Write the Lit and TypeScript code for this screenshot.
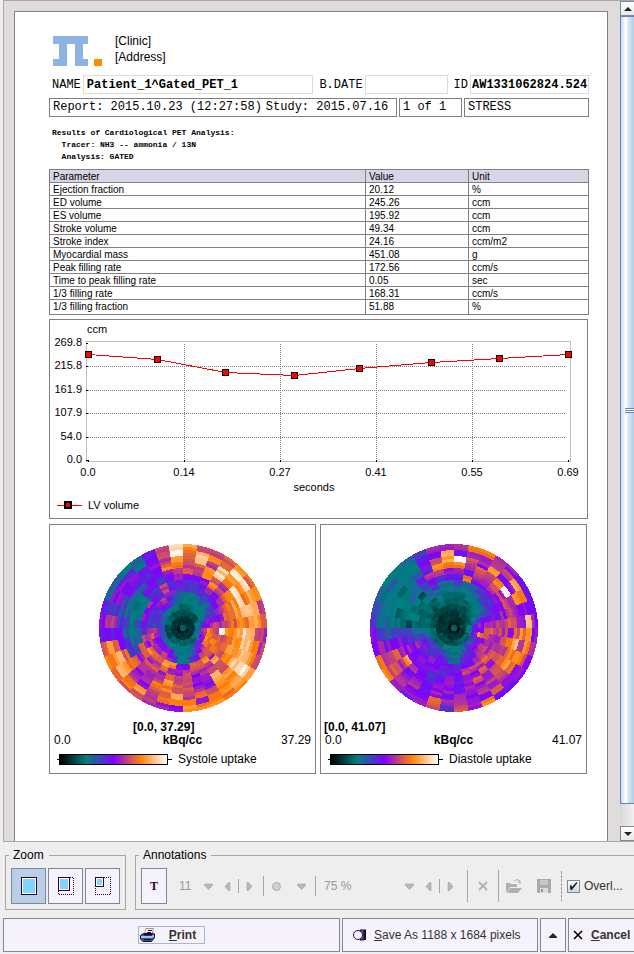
import { LitElement, html, svg, css } from "lit";
import { customElement, property } from "lit/decorators.js";

const SCALE: number[][] = [
  [0, 0, 0],
  [0, 128, 128],
  [128, 0, 255],
  [255, 128, 0],
  [255, 255, 255],
];

/** Colour for an uptake level between 0 and 20. */
function uptakeColor(level: number): string {
  const v = Math.max(0, Math.min(19.99, level)) / 5;
  const i = Math.floor(v);
  const f = v - i;
  const c = SCALE[i].map((a, k) => Math.round(a + (SCALE[i + 1][k] - a) * f));
  return `rgb(${c.join(",")})`;
}

// One string per 10 degree sector, clockwise from the top; each character is
// the level of a band, from the rim to the apex.
const SYSTOLE = [
  "gfdcea88554322", "cihdca88554322", "dfcgga98654322", "efiidfb8755322",
  "fjgfcda9655322", "eigjfeba865322", "fgfigedb885422", "dgiigfeaaa8522",
  "eghfgedccba522", "cchihgfkdfc622", "cfhigfeddfb621", "dfihfgfdffa521",
  "gjjigfdeefa521", "ggfgedgcdc8421", "fgfghdcfca8421", "gfdaabcda86421",
  "fbecbacd865422", "gecddcca555421", "bfgedcba555421", "bedfgdcf865421",
  "ccdecbegb95421", "egbccdceca5421", "efcbcdbeca6421", "figfebdfc96321",
  "ffie88ebca7321", "dgda866cdc7321", "aa9a6568cc7321", "acc87579877321",
  "9887656a886422", "6aa7645a886422", "6a9a655b986422", "58a97989a96422",
  "6599aa88ca5322", "9aaa98cc985322", "decfba8a765322", "ikfecba8654322",
];

const DIASTOLE = [
  "bakfb986443221", "fbdcae65443221", "fcbdca66543321", "bcgdcb86543321",
  "bcafdb88554321", "9gbjca88654321", "aegcdba8765321", "aabcdb9a997431",
  "bhbcedcccb9521", "agfebcddda9521", "cfdhedcbdfa521", "aegfdccbbb8421",
  "baegfddcca7421", "abcddbecba7421", "aebcadcba98421", "facbeac9a86421",
  "baabbaca865421", "ecba99a8655321", "8b9bbaa9655321", "debaa98a865321",
  "caaa98aa975321", "abcbaa9b984321", "cdbacaa9874321", "fdecgba9a84321",
  "eccebbab984321", "bcaaa987864221", "a8777876654221", "86655434443221",
  "76554455443221", "65555544443221", "56545654443221", "55566635433221",
  "65579866443221", "8aa9ca86543221", "bacfc865443221", "cggfba65443221",
];

function noise(a: number, b: number): number {
  const x = Math.sin(a * 127.1 + b * 311.7) * 43758.5453;
  return x - Math.floor(x);
}

function sectorPath(r0: number, r1: number, s: number): string {
  const a0 = (s * Math.PI) / 18;
  const a1 = ((s + 1) * Math.PI) / 18;
  const p = (r: number, a: number) =>
    `${(84 + r * Math.sin(a)).toFixed(2)} ${(84 - r * Math.cos(a)).toFixed(2)}`;
  return `M${p(r1, a0)}A${r1} ${r1} 0 0 1 ${p(r1, a1)}L${p(r0, a1)}L${p(r0, a0)}Z`;
}

@customElement("polar-map")
class PolarMap extends LitElement {
  @property({ attribute: false }) sectors: string[] = [];
  @property() range = "";
  @property() max = "";
  @property() name = "";
  @property({ type: Boolean, reflect: true }) inset = false;

  static styles = css`
    :host { display: block; border: 1px solid #808080; padding: 19px 0 6px; }
    .map { display: block; margin: 0 auto; width: 168px; height: 168px; }
    .range { font-weight: bold; line-height: 13px; padding: 9px 0 0 3px; }
    :host([inset]) .range { padding-left: 83px; }
    .scale { display: grid; grid-template-columns: 1fr auto 1fr; line-height: 13px; padding: 0 4px 0 4px; }
    .unit { font-weight: bold; }
    .max { text-align: right; }
    .legend { display: flex; align-items: center; line-height: 16px; margin-top: 4px; padding-left: 7px; }
    .tick { width: 2px; height: 1px; background: #000; }
    .tick.end { width: 4px; margin-right: 6px; }
    .bar {
      box-sizing: border-box; width: 109px; height: 11px; border: 1px solid #000;
      background: linear-gradient(to right, #000, #008080 25%, #8000ff 50%, #ff8000 75%, #fff);
    }
  `;

  private cells() {
    const out = [];
    for (let s = 0; s < 36; s++) {
      for (let r = 0; r < 28; r++) {
        const band = parseInt(this.sectors[s][r >> 1], 36);
        const spread = band < 6 ? 1 : band < 10 ? 1.4 : 2.2;
        const shift = (noise(s + this.name.length, r) - 0.5) * spread;
        out.push(svg`<path d=${sectorPath(84 - (r + 1) * 3, 84 - r * 3, s)} fill=${uptakeColor(band + shift)} />`);
      }
    }
    return out;
  }

  render() {
    return html`
      <svg class="map" viewBox="0 0 168 168" shape-rendering="crispEdges" role="img" aria-label=${this.name}>
        ${this.cells()}
        <circle cx="84" cy="84" r="3" fill="#005f5f" />
      </svg>
      <div class="range">${this.range}</div>
      <div class="scale"><span>0.0</span><span class="unit">kBq/cc</span><span class="max">${this.max}</span></div>
      <div class="legend">
        <span class="tick"></span><span class="bar"></span><span class="tick end"></span>
        <span>${this.name}</span>
      </div>
    `;
  }
}

@customElement("volume-chart")
class VolumeChart extends LitElement {
  static styles = css`
    :host { display: block; border: 1px solid #808080; }
    .plot { display: block; width: 100%; font-size: 11px; }
    .frame { fill: none; stroke: #c0c0c0; }
    .grid { stroke: #808080; stroke-dasharray: 1 1; }
    .tick { stroke: #000; }
    .curve { fill: none; stroke: #f00; }
    .mark { fill: #f00; stroke: #000; }
    .end { text-anchor: end; }
    .mid { text-anchor: middle; }
  `;

  render() {
    const ys: [string, number][] = [["269.8", 23], ["215.8", 46], ["161.9", 70], ["107.9", 93], ["54.0", 117], ["0.0", 140]];
    const xs: [string, number][] = [["0.0", 38], ["0.14", 134], ["0.27", 230], ["0.41", 326], ["0.55", 422], ["0.69", 518]];
    const pts = [[38, 34], [107, 39], [175, 52], [244, 55], [309, 48], [381, 42], [449, 38], [518, 34]];
    return html`
      <svg class="plot" viewBox="0 0 537 198" shape-rendering="crispEdges" role="img" aria-label="LV volume over time">
        <text x="37" y="13">ccm</text>
        <rect class="frame" x="36.5" y="21.5" width="484" height="120" />
        ${ys.map(([t, y], i) => svg`
          ${i > 0 && i < 5 ? svg`<line class="grid" x1="38" x2="515" y1=${y + 0.5} y2=${y + 0.5} />` : ""}
          <line class="tick" x1="36" x2="38" y1=${y + 0.5} y2=${y + 0.5} />
          <text class="end" x="32" y=${y + 3}>${t}</text>`)}
        ${xs.map(([t, x], i) => svg`
          ${i > 0 && i < 5 ? svg`<line class="grid" y1="24" y2="140" x1=${x + 0.5} x2=${x + 0.5} />` : ""}
          <line class="tick" y1="140" y2="142" x1=${x + 0.5} x2=${x + 0.5} />
          <text class="mid" x=${x} y="156">${t}</text>`)}
        <text class="mid" x="264" y="171">seconds</text>
        <polyline class="curve" points=${pts.map(([x, y]) => `${x + 0.5},${y + 0.5}`).join(" ")} />
        ${pts.map(([x, y]) => svg`<rect class="mark" x=${x - 2.5} y=${y - 2.5} width="6" height="6" />`)}
        <line class="curve" x1="7" x2="32" y1="185.5" y2="185.5" />
        <rect x="14" y="181" width="8" height="8" />
        <rect x="16" y="183" width="4" height="4" fill="#f00" />
        <text x="38" y="189">LV volume</text>
      </svg>
    `;
  }
}

const ROWS = [
  ["Ejection fraction", "20.12", "%"],
  ["ED volume", "245.26", "ccm"],
  ["ES volume", "195.92", "ccm"],
  ["Stroke volume", "49.34", "ccm"],
  ["Stroke index", "24.16", "ccm/m2"],
  ["Myocardial mass", "451.08", "g"],
  ["Peak filling rate", "172.56", "ccm/s"],
  ["Time to peak filling rate", "0.05", "sec"],
  ["1/3 filling rate", "168.31", "ccm/s"],
  ["1/3 filling fraction", "51.88", "%"],
];

@customElement("report-page")
class ReportPage extends LitElement {
  static styles = css`
    :host { display: block; box-sizing: border-box; background: #fff; border: 1px solid #808080; border-bottom: none; padding: 21px 18px 0 34px; }
    .head { display: flex; gap: 13px; padding-left: 4px; line-height: 16px; }
    .logo { display: block; width: 49px; height: 30px; margin-top: 3px; }
    .mono { font-family: "Liberation Mono", monospace; }
    .ids { display: flex; align-items: center; margin-top: 9px; padding-left: 3px; }
    .ids label { margin-right: 2px; white-space: nowrap; }
    .ids input {
      box-sizing: border-box; height: 19px; min-width: 0; border: 1px solid #dcdcdc; padding: 0 0 0 3px;
      font: bold 12px "Liberation Mono", monospace; color: #000; background: #fff; margin-right: 6px; outline: none;
    }
    .ids .name { flex: 1; }
    .ids .date { width: 83px; }
    .ids .id { width: 119px; margin-right: 0; padding-left: 1px; }
    .meta { display: flex; gap: 2px; margin-top: 4px; }
    .cell { box-sizing: border-box; height: 19px; border: 1px solid #808080; line-height: 17px; padding-left: 3px; white-space: nowrap; }
    .cell.when { flex: 1; display: flex; gap: 4px; }
    .cell.pages { width: 63px; }
    .cell.study { width: 125px; }
    .results { margin: 10px 0 6px; padding-left: 3px; font-size: 8px; font-weight: bold; line-height: 12px; white-space: pre; }
    table { width: 100%; border-collapse: collapse; table-layout: fixed; font-size: 10px; }
    th, td { border: 1px solid #808080; padding: 2px 0 0 3px; line-height: 10px; text-align: left; font-weight: normal; }
    th { background: #d8d6e6; }
    tr:last-child td { padding-bottom: 2px; }
    thead tr:last-child th { padding-bottom: 0; }
    .value { width: 103px; box-sizing: border-box; }
    .unit { width: 120px; box-sizing: border-box; }
    volume-chart { margin: 4px 1px 5px 0; }
    .maps { display: grid; grid-template-columns: 1fr 1fr; gap: 4px; padding-right: 2px; }
  `;

  render() {
    return html`
      <header class="head">
        <svg class="logo" viewBox="0 0 49 30" shape-rendering="crispEdges" aria-hidden="true">
          <path fill="#8db3e2" d="M0 0H35V8H30V23H35V30H22V8H14V30H0V23H6V8H0Z" />
          <path fill="#ff8c00" d="M41 23H49V30H41Z" />
        </svg>
        <div>[Clinic]<br />[Address]</div>
      </header>
      <div class="ids mono">
        <label for="name">NAME</label><input id="name" class="name" readonly value="Patient_1^Gated_PET_1" />
        <label for="date">B.DATE</label><input id="date" class="date" readonly value="" />
        <label for="pid">ID</label><input id="pid" class="id" readonly value="AW1331062824.524" />
      </div>
      <div class="meta mono">
        <div class="cell when"><span>Report: 2015.10.23 (12:27:58)</span><span>Study: 2015.07.16</span></div>
        <div class="cell pages">1 of 1</div>
        <div class="cell study">STRESS</div>
      </div>
      <div class="results mono">${"Results of Cardiological PET Analysis:\n  Tracer: NH3 -- ammonia / 13N\n  Analysis: GATED"}</div>
      <table>
        <thead><tr><th>Parameter</th><th class="value">Value</th><th class="unit">Unit</th></tr></thead>
        <tbody>${ROWS.map((r) => html`<tr>${r.map((c) => html`<td>${c}</td>`)}</tr>`)}</tbody>
      </table>
      <volume-chart></volume-chart>
      <div class="maps">
        <polar-map inset .sectors=${SYSTOLE} range="[0.0, 37.29]" max="37.29" name="Systole uptake"></polar-map>
        <polar-map .sectors=${DIASTOLE} range="[0.0, 41.07]" max="41.07" name="Diastole uptake"></polar-map>
      </div>
    `;
  }
}

const arrow = (d: string) => html`<svg class="arrow" viewBox="0 0 9 9" aria-hidden="true"><path d=${d} fill="#b8b8b8" stroke="#a0a0a0" stroke-width="0.6" /></svg>`;
const DOWN = "M0.5 2H8.500V3.500L4.500 7.500L0.500 3.500Z";
const LEFT = "M7 0.500V8.500H5.500L2 4.500L5.500 0.500Z";
const RIGHT = "M2 0.500V8.500H3.500L7 4.500L3.500 0.500Z";

@customElement("app-root")
class AppRoot extends LitElement {
  static styles = css`
    :host {
      display: flex; flex-direction: column; box-sizing: border-box; height: 100vh; min-height: 400px; overflow: hidden;
      background: #eee; font: 12px "Liberation Sans", Arial, sans-serif; color: #000;
    }
    button { font: inherit; color: #333; cursor: pointer; }
    .view { flex: 1; min-height: 0; display: flex; margin-left: 3px; border: 1px solid #aaa7a7; border-right: none; background: #e0dcdb; overflow: hidden; }
    .stage { flex: 1; min-width: 0; padding: 10px 12px 0 10px; display: flex; overflow: hidden; }
    report-page { flex: 1; min-width: 0; flex-shrink: 0; }
    .scroll { width: 14px; display: flex; flex-direction: column; background: linear-gradient(to right, #d8d8d8, #f0f0f0); }
    .step { height: 15px; padding: 0; border: 1px solid #7a8a99; border-right: none; background: linear-gradient(#fff, #e8e8e8); display: flex; align-items: center; justify-content: center; }
    .step svg { width: 8px; height: 4px; display: block; }
    .thumb { flex: 1; margin-bottom: 22px; border: 1px solid #6382bf; border-right: none; display: flex; align-items: center; justify-content: flex-end; background: linear-gradient(to right, #c8d8ec, #fff 35%, #cfdff0 65%, #b8cfe5); }
    .grip { width: 9px; height: 5px; background: repeating-linear-gradient(#6382bf 0 1px, #fff 1px 2px); }

    .tools { display: flex; gap: 9px; padding: 6px 0 0 5px; }
    fieldset { margin: 0; min-width: 0; border: 1px solid #a8a5a5; padding: 6px 5px 5px; display: flex; }
    legend { margin-left: -2px; padding: 0 5px 0 4px; line-height: 14px; font-size: 12px; }
    .zoom { gap: 2px; }
    .notes { flex: 1; border-right: none; padding-right: 0; align-items: center; }
    .tile { box-sizing: border-box; width: 35px; height: 36px; padding: 0; border: 1px solid #7a8a99; background: #f5f2fb; display: flex; align-items: center; justify-content: center; }
    .tile.on { background: #b8cfe5; }
    .tile.letter { width: 26px; font: bold 12px "Liberation Serif", serif; color: #303; margin-right: 12px; }
    .tile svg { width: 16px; height: 18px; }
    .flat { border: none; background: none; padding: 0; display: block; height: 16px; }
    .arrow { display: block; width: 9px; height: 9px; flex: none; }
    select { appearance: none; border: none; background: none; font: inherit; color: #999; padding: 0; margin: 0; opacity: 1; }
    .size { width: 25px; }
    .percent { width: 81px; }
    .row { display: flex; align-items: center; }
    .colour { display: flex; align-items: center; gap: 16px; }
    .pair { display: flex; align-items: center; gap: 6px; margin-left: 10px; }
    .pair .flat, .colour .flat { display: flex; align-items: center; }
    .sep { width: 1px; height: 14px; background: #a8a5a5; }
    .sep.mid { height: 20px; margin: 0 8px 0 9px; }
    .sep.tall { height: 32px; margin: 0 7px; }
    .sep.first { margin-left: 12px; }
    .sep.dash { height: 30px; background: repeating-linear-gradient(#999 0 3px, transparent 3px 4px); margin: 0 5px 0 9px; }
    .ico { display: block; width: 16px; height: 16px; }
    .files { display: flex; gap: 14px; }
    .check { display: flex; align-items: center; gap: 4px; color: #333; white-space: nowrap; }
    .check input { appearance: none; box-sizing: border-box; width: 13px; height: 13px; margin: 0; border: 1px solid #7a8a99; background: linear-gradient(#fff, #c4d6e8); display: grid; place-items: center; }
    .check input:checked::before { content: ""; width: 8px; height: 8px; background: #222; clip-path: polygon(0 40%, 25% 40%, 30% 62%, 88% 0, 100% 12%, 30% 100%, 12% 100%); }

    .actions { display: grid; grid-template-columns: minmax(0, 338fr) 196px 26px 66px; gap: 2px; padding: 8px 0 2px 3px; }
    .act { box-sizing: border-box; height: 34px; padding: 0; border: 1px solid #7a8a99; background: #f5f2fb; display: flex; align-items: center; justify-content: center; white-space: nowrap; }
    .act.save { gap: 6px; justify-content: flex-start; padding-left: 9px; }
    .act.cancel { border-right: none; justify-content: flex-start; gap: 8px; padding-left: 4px; }
    .act b { font-weight: bold; }
    .focus { display: flex; align-items: center; gap: 13px; box-sizing: border-box; height: 18px; padding: 0 8px 0 1px; border: 1px solid #a3b8cc; }
  `;

  private zoomIcon(w: number, h: number) {
    return html`<svg viewBox="0 0 16 18" shape-rendering="crispEdges" aria-hidden="true">
      ${w < 16 ? svg`<path d="M${w} 0.500H15.500V17.500H0.500V${h}" fill="none" stroke="#330033" stroke-dasharray="1 1" />` : ""}
      <rect x="0.5" y="0.5" width=${w - 1} height=${h - 1} fill="#fff" stroke="#330033" />
      <rect x="2" y="2" width=${w - 4} height=${h - 4} fill="#80d4ff" />
    </svg>`;
  }

  private pair(what: string) {
    return html`<div class="pair">
      <button class="flat" disabled aria-label="Decrease ${what}">${arrow(LEFT)}</button>
      <span class="sep"></span>
      <button class="flat" disabled aria-label="Increase ${what}">${arrow(RIGHT)}</button>
    </div>`;
  }

  render() {
    return html`
      <main class="view">
        <div class="stage"><report-page></report-page></div>
        <div class="scroll">
          <button class="step" aria-label="Scroll up"><svg viewBox="0 0 8 4"><path d="M4 0L8 4H0Z" fill="#222" /></svg></button>
          <div class="thumb"><span class="grip"></span></div>
          <button class="step" aria-label="Scroll down"><svg viewBox="0 0 8 4"><path d="M4 4L8 0H0Z" fill="#222" /></svg></button>
        </div>
      </main>
      <section class="tools">
        <fieldset class="zoom">
          <legend>Zoom</legend>
          <button class="tile on" aria-label="Fit page">${this.zoomIcon(16, 18)}</button>
          <button class="tile" aria-label="Zoom 75 percent">${this.zoomIcon(12, 14)}</button>
          <button class="tile" aria-label="Zoom 50 percent">${this.zoomIcon(9, 10)}</button>
        </fieldset>
        <fieldset class="notes">
          <legend>Annotations</legend>
          <button class="tile letter" aria-label="Add text">T</button>
          <div class="row"><select class="size" disabled aria-label="Font size"><option>11</option></select>${arrow(DOWN)}</div>
          ${this.pair("font size")}
          <span class="sep mid"></span>
          <div class="colour">
            <button class="flat" disabled aria-label="Colour">
              <svg class="arrow" viewBox="0 0 9 9"><circle cx="4.5" cy="4.5" r="4" fill="#d0d0d0" stroke="#aaa" /></svg>
            </button>
            <button class="flat" disabled aria-label="Pick colour">${arrow(DOWN)}</button>
          </div>
          <span class="sep mid"></span>
          <div class="row"><select class="percent" disabled aria-label="Opacity"><option>75 %</option></select>${arrow(DOWN)}</div>
          ${this.pair("opacity")}
          <span class="sep tall first"></span>
          <button class="flat" disabled aria-label="Delete">
            <svg class="ico" viewBox="0 0 16 16"><path d="M4 4L12 12M12 4L4 12" stroke="#b4b4b4" stroke-width="2" /></svg>
          </button>
          <span class="sep tall"></span>
          <div class="files">
            <button class="flat" disabled aria-label="Open">
              <svg class="ico" viewBox="0 0 16 16"><path d="M0 14V5H4L5 6H11V9H4L1 14Z" fill="#b0b0b0" /><path d="M4 10H16L12 15H1Z" fill="#b0b0b0" /><path d="M8 3Q11 0 14 3V6M11.500 4H14.500" fill="none" stroke="#b0b0b0" /></svg>
            </button>
            <button class="flat" disabled aria-label="Save annotations">
              <svg class="ico" viewBox="0 0 16 16"><path d="M1 1H15V15H2L1 14Z" fill="#aaa" /><path d="M4 2H12V7H4Z" fill="#c6c6c6" /><path d="M4 10H12V15H4Z" fill="#ddd" /><path d="M5 11H7V14H5Z" fill="#999" /></svg>
            </button>
          </div>
          <span class="sep dash"></span>
          <label class="check"><input type="checkbox" checked />Overl...</label>
        </fieldset>
      </section>
      <footer class="actions">
        <button class="act">
          <span class="focus">
            <svg class="ico" viewBox="0 0 16 16" aria-hidden="true">
              <path d="M4.500 7L6 1.500H13.500L12 7Z" fill="#fff" stroke="#a09890" />
              <path d="M8 3.500H12M7 5.500H11" stroke="#303" />
              <path d="M1.500 7.500L4 6.500H12L14.500 7V10.500L11.500 14.500H3L0.500 12V8.500Z" fill="#3a5a7c" stroke="#303" />
              <path d="M1 10H12L14 8.500" fill="none" stroke="#80d4ff" stroke-width="2" />
              <path d="M4 12.500H11" stroke="#303" />
              <path d="M4 7.500H12" stroke="#303" stroke-width="2" />
            </svg>
            <b><u>P</u>rint</b>
          </span>
        </button>
        <button class="act save">
          <svg class="ico" viewBox="0 0 16 16" aria-hidden="true">
            <path d="M8 3H12V13H8Z" fill="#407080" stroke="#203" /><path d="M13 2.500V13" stroke="#203" stroke-width="2" />
            <circle cx="6" cy="8" r="4.500" fill="#f4f8ff" stroke="#306" />
          </svg>
          <span><u>S</u>ave As 1188 x 1684 pixels</span>
        </button>
        <button class="act" aria-label="More formats"><svg width="8" height="5" viewBox="0 0 8 5"><path d="M4 0L8 4V5H0V4Z" fill="#223" /></svg></button>
        <button class="act cancel">
          <svg width="10" height="10" viewBox="0 0 10 10" aria-hidden="true"><path d="M1 1L9 9M9 1L1 9" stroke="#000" stroke-width="1.600" /></svg>
          <b><u>C</u>ancel</b>
        </button>
      </footer>
    `;
  }
}
